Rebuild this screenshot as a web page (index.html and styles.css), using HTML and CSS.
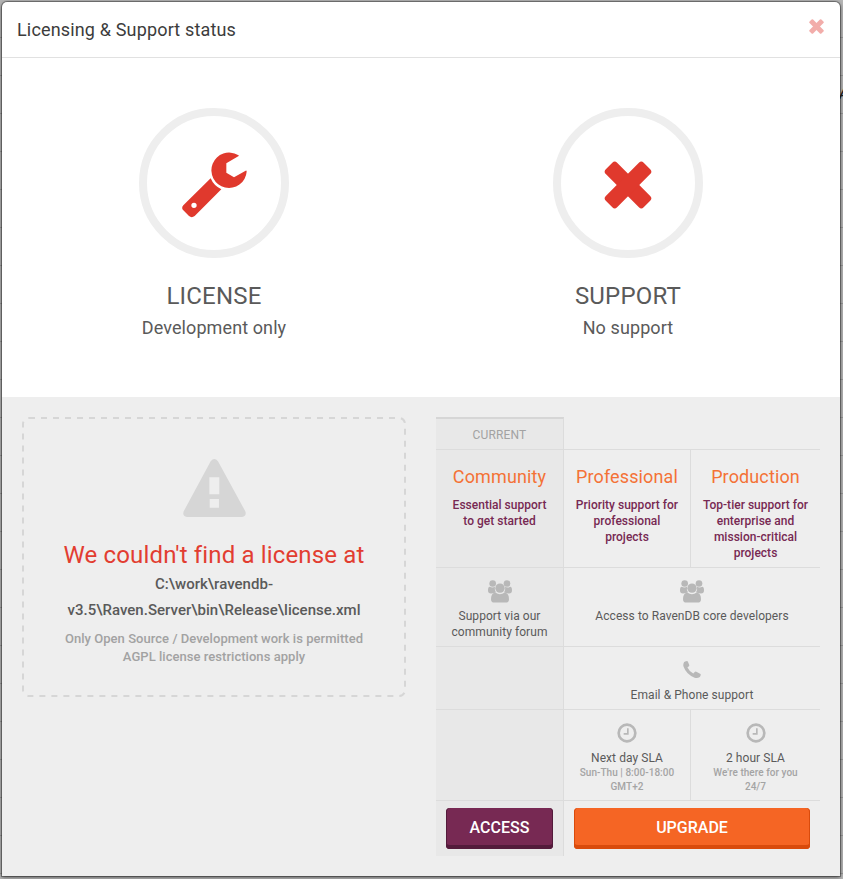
FILE: index.html
```html
<!DOCTYPE html>
<html lang="en">
<head>
<meta charset="utf-8">
<title>Licensing &amp; Support status</title>
<link rel="stylesheet" href="styles.css">
</head>
<body>
<svg class="defs" aria-hidden="true">
  <symbol id="cross" viewBox="0 0 48 48">
    <g transform="rotate(45 24 24)"><rect x="-2.8" y="16" width="53.6" height="16" rx="3.4"/><rect x="16" y="-2.8" width="16" height="53.6" rx="3.4"/></g>
  </symbol>
  <symbol id="users" viewBox="0 0 72 68">
    <circle cx="14" cy="10" r="10"/><circle cx="57" cy="10" r="10"/>
    <path d="M5 20Q13 24 21 20Q19 31 24 36Q17 40 9 40Q0 40 0 31Q0 20 5 20ZM67 20Q59 24 51 20Q53 31 48 36Q55 40 63 40Q72 40 72 31Q72 20 67 20Z"/>
    <circle cx="36" cy="24" r="14"/>
    <path d="M22 37Q36 48 50 37Q63 39 63 57Q63 67 53 67H19Q9 67 9 57Q9 39 22 37Z"/>
  </symbol>
  <symbol id="clock" viewBox="0 0 60 60">
    <circle cx="30" cy="30" r="25" fill="none" stroke="currentColor" stroke-width="8"/>
    <path d="M30 16h5v19H20v-5h10z"/>
  </symbol>
</svg>
<span class="page-sliver">A</span>
<main class="modal">
  <header class="modal-header">
    <h1>Licensing &amp; Support status</h1>
    <svg class="close"><use href="#cross"/></svg>
  </header>
  <section class="statuses">
    <div class="status">
      <div class="ring">
        <svg width="70" height="70" viewBox="147 144 210 210"><path fill-rule="evenodd" d="M326 168L289 190V218L312 232L347 212Q350 211 350 215A53 53 0 1 1 324 165Q327 166 326 168ZM242 235Q251 257 274 268L194 348Q185 355 177 348L160 331Q153 324 160 316ZM200 316A8 8 0 1 0 184 316A8 8 0 1 0 200 316Z"/></svg>
      </div>
      <h2>LICENSE</h2>
      <p>Development only</p>
    </div>
    <div class="status">
      <div class="ring"><svg class="big-cross"><use href="#cross"/></svg></div>
      <h2>SUPPORT</h2>
      <p>No support</p>
    </div>
  </section>
  <section class="details">
    <div class="missing">
      <svg class="frame"><rect x="1" y="1" width="382" height="278" rx="6"/></svg>
      <svg class="warning" viewBox="0 0 189 175"><path fill-rule="evenodd" d="M83 7Q94-7 105 7L187 157Q193 171 178 175H11Q-4 171 2 157ZM79 55V106H109V55ZM80 121V147H108V121Z"/></svg>
      <h3>We couldn't find a license at</h3>
      <p class="path">C:\work\ravendb-<br>v3.5\Raven.Server\bin\Release\license.xml</p>
      <p class="note">Only Open Source / Development work is permitted<br>AGPL license restrictions apply</p>
    </div>
    <div class="plans">
      <div class="cell own current">CURRENT</div>
      <div class="cell wide"></div>

      <div class="cell own plan"><h4>Community</h4><p>Essential support<br>to get started</p></div>
      <div class="cell mid plan"><h4>Professional</h4><p>Priority support for<br>professional<br>projects</p></div>
      <div class="cell plan"><h4>Production</h4><p>Top-tier support for<br>enterprise and<br>mission-critical<br>projects</p></div>

      <div class="cell own feature"><svg class="users"><use href="#users"/></svg><p>Support via our<br>community forum</p></div>
      <div class="cell wide feature"><svg class="users"><use href="#users"/></svg><p>Access to RavenDB core developers</p></div>

      <div class="cell own"></div>
      <div class="cell wide feature call">
        <svg class="phone" viewBox="0 0 54 52"><path d="M3 3Q8 0 13 0Q15 3 19 13Q19 16 13 20Q18 31 31 38Q36 32 38 32Q41 32 53 40Q55 43 51 49Q44 53 35 51Q10 42 1 17Q-1 9 3 3Z"/></svg>
        <p>Email &amp; Phone support</p>
      </div>

      <div class="cell own"></div>
      <div class="cell mid feature sla"><svg class="clock"><use href="#clock"/></svg><p>Next day SLA</p><small>Sun-Thu | 8:00-18:00<br>GMT+2</small></div>
      <div class="cell feature sla"><svg class="clock"><use href="#clock"/></svg><p>2 hour SLA</p><small>We're there for you<br>24/7</small></div>

      <div class="cell own action"><button class="access">ACCESS</button></div>
      <div class="cell wide action"><button class="upgrade">UPGRADE</button></div>
    </div>
  </section>
</main>
</body>
</html>
```
FILE: styles.css
```css
* { box-sizing: border-box; }
h1, h2, h3, h4, p { margin: 0; font-weight: 400; }
svg { display: block; fill: currentColor; flex: none; }
body {
  margin: 0;
  height: 879px;
  padding: 2px 0 0 2px;
  overflow: hidden;
  font-family: Roboto, sans-serif;
  color: #5a5a5a;
  text-align: center;
  background: repeating-linear-gradient(#b5b5b5 0 37px, #989898 37px 38px);
}
.defs { position: absolute; width: 0; height: 0; }
.page-sliver {
  position: absolute;
  left: 839px;
  top: 86px;
  font: italic 500 14px/16px Roboto, sans-serif;
  color: #222;
}
.modal {
  position: relative;
  width: 838px;
  height: 874px;
  background: #fff;
  border-radius: 5px 5px 0 0;
  box-shadow: 0 0 0 1px rgba(0,0,0,.3), 0 1px 4px rgba(0,0,0,.6);
}
.modal-header {
  display: flex;
  justify-content: space-between;
  height: 56px;
  padding: 16px 16px 0 15px;
  border-bottom: 1px solid #e1e1e1;
}
h1 { font-size: 18px; line-height: 24px; letter-spacing: .16px; color: #3c3c3c; }
.close { width: 15px; height: 15px; margin-top: 1px; color: #f2adaa; }
.statuses { display: flex; height: 339px; padding: 50px 5px 0; }
.status { flex: 0 0 414px; display: flex; flex-direction: column; align-items: center; }
.ring {
  display: flex;
  align-items: center;
  justify-content: center;
  width: 150px;
  height: 150px;
  border: 8px solid #eee;
  border-radius: 50%;
  color: #e0392d;
}
.big-cross { width: 48px; height: 48px; margin-top: 4px; }
h2 { margin-top: 22px; font-size: 24px; line-height: 32px; letter-spacing: .2px; }
.status p { font-size: 18px; line-height: 32px; letter-spacing: .1px; }
.details {
  display: flex;
  justify-content: space-between;
  align-items: flex-start;
  height: 479px;
  padding: 20px;
  background: #eee;
}
.missing {
  position: relative;
  display: flex;
  flex-direction: column;
  align-items: center;
  width: 384px;
  height: 280px;
  padding-top: 42px;
}
.frame { position: absolute; inset: 0; width: 384px; height: 280px; fill: none; stroke: #d6d6d6; stroke-width: 2; stroke-dasharray: 6 6; }
.warning { width: 63px; height: 58px; color: #d6d6d6; }
h3 { margin-top: 22px; font-size: 24px; line-height: 32px; letter-spacing: .15px; color: #e23d31; }
.path { font-size: 15px; font-weight: 500; line-height: 26px; letter-spacing: .02px; }
.note { margin-top: 7px; font-size: 13px; line-height: 18px; letter-spacing: .04px; color: #a2a2a2; font-weight: 500; }
.plans {
  display: grid;
  grid-template-columns: 128px 127px 129px;
  grid-template-rows: 33px 118px 79px 63px 91px 55px;
}
.cell { border-bottom: 1px solid #dcdcdc; }
.own { background: #e8e8e8; border-right: 1px solid #dcdcdc; }
.mid { border-right: 1px solid #dcdcdc; }
.wide { grid-column: span 2; }
.current { border-top: 2px solid #d6d6d6; padding-top: 1px; font-size: 12px; line-height: 31px; letter-spacing: .15px; color: #a2a2a2; }
h4 { padding-top: 15px; font-size: 18px; line-height: 24px; letter-spacing: .12px; color: #f47236; }
.plan p { margin-top: 8px; font-size: 12px; font-weight: 500; line-height: 16px; letter-spacing: .02px; color: #772953; }
.feature { display: flex; flex-direction: column; align-items: center; padding-top: 12px; font-size: 12px; line-height: 16px; color: #b8b8b8; }
.feature p { letter-spacing: .06px; color: #5a5a5a; }
.users { width: 24px; height: 23px; margin-bottom: 5px; }
.call { padding-top: 14px; }
.phone { width: 18px; height: 17px; margin-bottom: 9px; }
.sla { padding-top: 13px; }
.clock { width: 20px; height: 20px; margin-bottom: 7px; }
small { font-size: 10px; font-weight: 500; line-height: 14px; letter-spacing: .04px; color: #a4a4a4; }
.action { padding: 7px 10px 0; border-bottom: 0; }
button {
  display: block;
  width: 100%;
  height: 41px;
  padding: 0 0 2px;
  border: 0;
  border-radius: 4px;
  font: 500 16px/38px Roboto, sans-serif;
  color: #fff;
}
.access { background: #772953; box-shadow: inset 0 -4px #531b3b, inset -1px 0 #531b3b, inset 1px 0 #531b3b; }
.upgrade { background: #f56524; box-shadow: inset 0 -4px #d94b0c, inset -1px 0 #d94b0c, inset 1px 0 #d94b0c; }
```
